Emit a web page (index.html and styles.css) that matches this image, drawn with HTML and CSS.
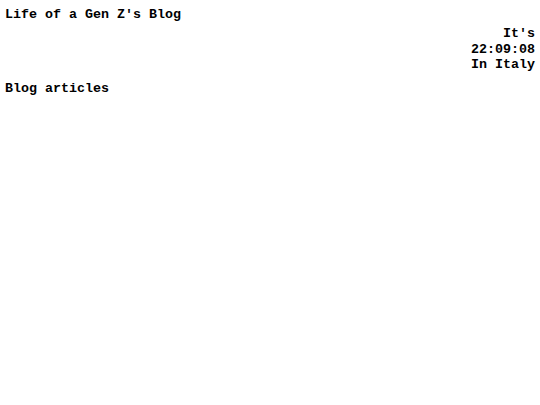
FILE: index.html
```html
<!DOCTYPE html>
<html>
<head>
<meta charset="utf-8">
<link rel="stylesheet" href="styles.css">
</head>
<body>
<header class="header">
  <h1 class="title">Life of a Gen Z's Blog</h1>
  <div class="clock">
    <div>It's</div>
    <div>22:09:08</div>
    <div>In Italy</div>
  </div>
</header>
<main>
  <h2 class="section">Blog articles</h2>
</main>
</body>
</html>
```
FILE: styles.css
```css
html, body {
  margin: 0;
  background: #fff;
}
body {
  padding: 7px 5px;
  font-family: "Courier New", "Nimbus Mono PS", "FreeMono", "Liberation Mono", monospace;
  font-weight: bold;
  font-size: 13.33px;
  line-height: 16px;
  color: #000;
}
.header {
  display: flex;
  flex-direction: column;
}
.title {
  margin: 0;
  font-size: inherit;
  line-height: 16px;
}
.clock {
  margin-top: 3px;
  text-align: right;
  line-height: 15.5px;
}
.section {
  margin: 8.5px 0 0;
  font-size: inherit;
  line-height: 16px;
}
```
